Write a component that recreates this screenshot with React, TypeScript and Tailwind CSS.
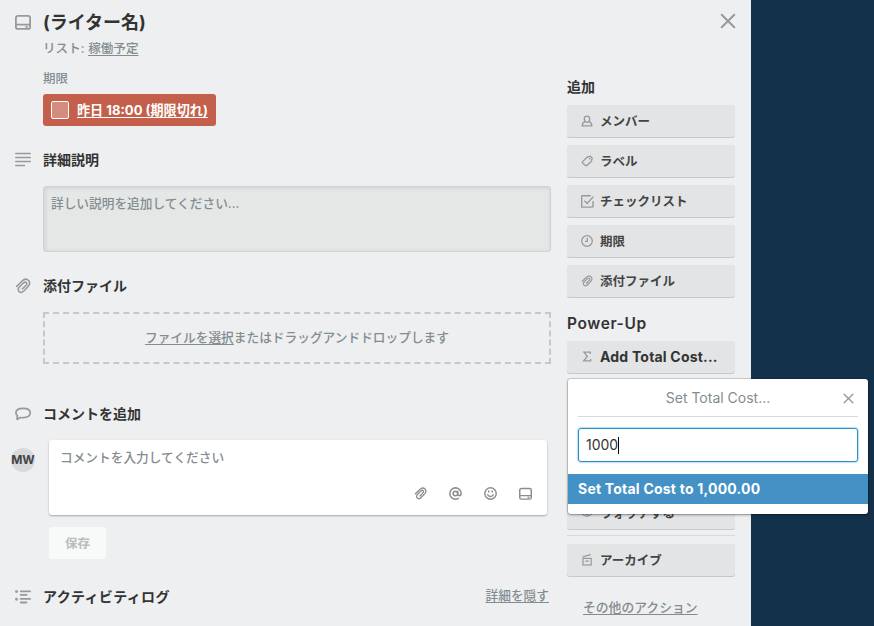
import { clsx } from "clsx";

type IconProps = { className?: string };

function CardIcon({ className }: IconProps) {
  return (
    <svg className={className} viewBox="0 0 16 16" fill="none" stroke="currentColor" strokeWidth="1.8">
      <rect x="0.9" y="1.9" width="14.2" height="13" rx="2" />
      <path d="M1 10.6h14M10.5 12.9h2.2" />
    </svg>
  );
}

function LinesIcon({ className }: IconProps) {
  return (
    <svg className={className} viewBox="0 0 16 16" fill="none" stroke="currentColor" strokeWidth="1.7" strokeLinecap="round">
      <path d="M0.8 1.5h14.4M0.8 5.5h14.4M0.8 9.5h14.4M0.8 13.5h8.6" />
    </svg>
  );
}

function ClipIcon({ className }: IconProps) {
  return (
    <svg className={className} viewBox="0 0 16 16" fill="none" stroke="currentColor" strokeWidth="1.6" strokeLinecap="round" strokeLinejoin="round">
      <path d="M1.7 8.4 7.2 3C9.3 1 11.9.9 13.500 2.500c1.500 1.600 1.300 4-.4 6l-4.300 4.500c-1.500 1.500-3.500 1.800-4.800.5-1.200-1.200-1-3.100.4-4.500l4.200-4.200c.9-.8 2-.9 2.700-.2.700.7.600 1.800-.2 2.600L7.300 11" />
    </svg>
  );
}

function CommentIcon({ className }: IconProps) {
  return (
    <svg className={className} viewBox="0 0 16 16" fill="none" stroke="currentColor" strokeWidth="1.7" strokeLinejoin="round">
      <path d="M8.3 2.3c-4 0-7.4 1.5-7.4 4.4 0 1.1.5 2.1 1.5 2.9L2 13.4l3.200-1.900c.9.2 1.900.3 3 .2 4-.2 7-2 7-5 0-2.800-2.900-4.400-6.900-4.400Z" />
    </svg>
  );
}

function ActivityIcon({ className }: IconProps) {
  return (
    <svg className={className} viewBox="0 0 16 16" fill="none" stroke="currentColor" strokeWidth="1.8" strokeLinecap="round">
      <path d="M5.7 2.300h9.400M5.7 5.900h5.800M5.700 9.900h9.400M5.700 13.500h5.800" />
      <path d="M1.5 2.6v.01M1.5 10.2v.01" strokeWidth="2.9" />
    </svg>
  );
}

function MemberIcon({ className }: IconProps) {
  return (
    <svg className={className} viewBox="0 0 12 12" fill="none" stroke="currentColor" strokeWidth="1.3" strokeLinejoin="round">
      <path d="M4.1 6.3C3.500 5.600 3.300 4.700 3.300 3.800 3.300 2.200 4.300 1.200 6 1.200s2.700 1 2.700 2.600c0 .9-.2 1.800-.8 2.500" />
      <path d="M4.100 6.300C2.300 7 1.200 8.200 1.200 10.900h9.600c0-2.700-1.100-3.900-2.900-4.600-1.100 1.300-2.700 1.300-3.800 0Z" />
    </svg>
  );
}

function LabelIcon({ className }: IconProps) {
  return (
    <svg className={className} viewBox="0 0 12 12" fill="none" stroke="currentColor" strokeWidth="1.3" strokeLinejoin="round">
      <path d="M6.800 1.800 8.700 1.300c.5-.1.900 0 1.200.3l.9.9c.3.300.4.700.3 1.200L10.500 5.800c-.1.300-.2.500-.4.700l-4.300 3.900c-.4.400-.9.400-1.300 0L1.600 7.900c-.4-.4-.4-.9 0-1.300L6 2.300c.2-.3.500-.4.800-.5Z" />
      <path d="M8.700 3.600v.01" strokeWidth="1.7" strokeLinecap="round" />
    </svg>
  );
}

function ChecklistIcon({ className }: IconProps) {
  return (
    <svg className={className} viewBox="0 0 12 12" fill="none" stroke="currentColor" strokeWidth="1.3">
      <path d="M9 .7H1.300C.9.700.6 1 .6 1.400v9.100c0 .4.300.7.7.7h9.100c.4 0 .7-.3.7-.7V5.500" />
      <path d="m3.200 5.300 2.500 2.600 5.700-6.400" />
    </svg>
  );
}

function ClockIcon({ className }: IconProps) {
  return (
    <svg className={className} viewBox="0 0 12 12" fill="none" stroke="currentColor" strokeWidth="1.3">
      <circle cx="6" cy="6" r="5.3" />
      <path d="M6.300 2.800v3.500H4" />
    </svg>
  );
}

function SigmaIcon({ className }: IconProps) {
  return (
    <svg className={className} viewBox="0 0 12 12" fill="none" stroke="currentColor" strokeWidth="1.3">
      <path d="M9.300 3V1.200H3L6.400 5.500 2.700 9.900h7V8.100" />
    </svg>
  );
}

function WatchIcon({ className }: IconProps) {
  return (
    <svg className={className} viewBox="0 0 12 12" fill="none" stroke="currentColor" strokeWidth="1.2">
      <path d="M.6 6C3.600 1.800 8.400 1.800 11.400 6 8.400 10.200 3.600 10.200.6 6Z" />
      <circle cx="6" cy="6" r="1.5" />
    </svg>
  );
}

function ArchiveIcon({ className }: IconProps) {
  return (
    <svg className={className} viewBox="0 0 12 12" fill="none" stroke="currentColor" strokeWidth="1.2">
      <path d="M1.500 2.900 9.800.7" />
      <rect x="2" y="4.4" width="8.2" height="6.6" />
      <path d="M4.300 7.100h3.600" />
    </svg>
  );
}

function AtIcon({ className }: IconProps) {
  return (
    <svg className={className} viewBox="0 0 12 12" fill="none" stroke="currentColor" strokeWidth="1.4" strokeLinecap="round">
      <circle cx="5.9" cy="6" r="2.1" />
      <path d="M8.100 3.900v2.800c0 .8.600 1.300 1.400 1.300 1.100 0 1.700-.9 1.700-2C11.200 3 8.900.8 6 .8A5.200 5.200 0 0 0 .8 6c0 2.900 2.300 5.200 5.200 5.200 1 0 1.900-.3 2.600-.7" />
    </svg>
  );
}

function SmileIcon({ className }: IconProps) {
  return (
    <svg className={className} viewBox="0 0 12 12" fill="none" stroke="currentColor" strokeWidth="1.3" strokeLinecap="round">
      <circle cx="6" cy="6" r="5.3" />
      <path d="M4.400 3.700v1M7.600 3.700v1M3.400 7.200c.8 2 4.400 2 5.200 0" />
    </svg>
  );
}

function CloseIcon({ className }: IconProps) {
  return (
    <svg className={className} viewBox="0 0 16 16" fill="none" stroke="currentColor" strokeWidth="2" strokeLinecap="round">
      <path d="m1.700 1.700 12.600 12.600M14.300 1.700 1.700 14.300" />
    </svg>
  );
}

function SectionHeading({ icon, title, className }: { icon: React.ReactNode; title: string; className?: string }) {
  return (
    <div className={clsx("flex h-6 items-center", className)}>
      <span className="flex w-[43px] shrink-0 pl-[15px] text-[#999]">{icon}</span>
      <h3 className="pb-0.5 text-[14px] font-bold whitespace-nowrap text-[#333]">{title}</h3>
    </div>
  );
}

function SideButton({
  icon,
  label,
  className,
  labelClassName = "pt-[2px] text-[12.5px] text-[#444]",
}: {
  icon: React.ReactNode;
  label: string;
  className?: string;
  labelClassName?: string;
}) {
  return (
    <button
      className={clsx(
        "flex h-8 w-[168px] shrink-0 items-center rounded-[3px] bg-[#e2e4e6] pl-[14px] font-bold whitespace-nowrap shadow-[0_1px_0_#c4c9cc]",
        className,
      )}
    >
      <span className="mr-[7px] flex w-3 text-[#999]">{icon}</span>
      <span className={labelClassName}>{label}</span>
    </button>
  );
}

const addButtons = [
  { label: "メンバー", icon: <MemberIcon className="size-3" /> },
  { label: "ラベル", icon: <LabelIcon className="size-3" /> },
  { label: "チェックリスト", icon: <ChecklistIcon className="size-[13px] shrink-0" /> },
  { label: "期限", icon: <ClockIcon className="size-3" /> },
  { label: "添付ファイル", icon: <ClipIcon className="size-3" /> },
];

function MainColumn() {
  return (
    <main className="flex w-[551px] shrink-0 flex-col">
      <div className="mt-[10px] flex h-6 items-center">
        <CardIcon className="mr-3 ml-[15px] size-4 text-[#999]" />
        <h2 className="text-[18px] font-bold text-[#333]">(ライター名)</h2>
      </div>
      <p className="mt-[5px] ml-[43px] h-5 text-[12.5px] leading-5 font-medium tracking-[0.1px]">
        リスト: <a className="underline underline-offset-2">稼働予定</a>
      </p>
      <p className="mt-[10px] ml-[43px] h-5 text-[12.5px] leading-5 font-medium">期限</p>
      <div className="mt-[5px] ml-[43px] flex h-8 w-[173px] items-center rounded-[3px] bg-[#c35f4a] pl-2 text-[13.1px] font-bold whitespace-nowrap text-white">
        <span className="mr-2 size-[18px] rounded-[2px] border border-white bg-[#d28d7f]" />
        <span className="pt-px underline underline-offset-2">昨日 18:00 (期限切れ)</span>
      </div>

      <SectionHeading className="mt-[22px]" icon={<LinesIcon className="size-4" />} title="詳細説明" />
      <div className="mt-[14px] ml-[43px] h-[66px] rounded-[3px] border border-[#cdd2d4] bg-[#e4e7e6] px-[7px] pt-[7px] text-[12.7px] leading-5 font-medium shadow-[inset_1px_1px_4px_rgba(0,0,0,0.1)]">
        詳しい説明を追加してください...
      </div>

      <SectionHeading className="mt-[22px]" icon={<ClipIcon className="size-4" />} title="添付ファイル" />
      <div className="mt-[14px] ml-[43px] flex h-[52px] items-center justify-center border-2 border-dashed border-[#c4c9cc] text-[12.7px] font-medium">
        <span className="underline underline-offset-2">ファイルを選択</span>またはドラッグアンドドロップします
      </div>

      <SectionHeading className="mt-[38px]" icon={<CommentIcon className="size-4" />} title="コメントを追加" />
      <div className="mt-[14px] flex">
        <div className="mt-2 mr-[14px] ml-[11px] flex size-6 items-center justify-center rounded-full bg-[#d6dadc] text-[12px] font-bold text-[#444]">
          MW
        </div>
        <div className="flex h-[75px] w-[498px] flex-col justify-between rounded-[3px] bg-white pt-2 pr-[15px] pb-[15px] pl-[11px] shadow-[0_1px_2px_rgba(0,0,0,0.3)]">
          <p className="text-[12.7px] leading-5 font-medium">コメントを入力してください</p>
          <div className="flex justify-end gap-[22px] text-[#8c8c8c]">
            <ClipIcon className="size-[13px]" />
            <AtIcon className="size-[13px]" />
            <SmileIcon className="size-[13px]" />
            <CardIcon className="size-[13px]" />
          </div>
        </div>
      </div>
      <button className="mt-3 ml-[49px] h-8 w-[57px] rounded-[3px] bg-[#f8f9f9] pt-[2px] text-[12.5px] font-bold text-[#b8bcbf]">
        保存
      </button>

      <div className="mt-[26px] flex items-center justify-between pr-[2px]">
        <SectionHeading icon={<ActivityIcon className="size-4" />} title="アクティビティログ" className="tracking-[0.35px]" />
        <a className="pb-0.5 text-[12.7px] font-medium underline underline-offset-2">詳細を隠す</a>
      </div>
    </main>
  );
}

function Sidebar() {
  return (
    <aside className="ml-4 flex w-[168px] shrink-0 flex-col">
      <CloseIcon className="mt-[13px] -mr-px size-4 self-end text-[#999]" />
      <h3 className="mt-[47px] h-[22px] text-[14px] leading-[22px] font-bold text-[#333]">追加</h3>
      <div className="mt-[7px] flex flex-col gap-2">
        {addButtons.map((button) => (
          <SideButton key={button.label} {...button} />
        ))}
      </div>
      <h3 className="mt-4 h-[22px] text-[15.5px] leading-[22px] font-semibold tracking-[0.6px] text-[#333]">Power-Up</h3>
      <SideButton
        className="mt-[6px]"
        labelClassName="pb-px text-[14px] tracking-[0.2px] text-[#333]"
        icon={<SigmaIcon className="size-3" />}
        label="Add Total Cost..."
      />
      <SideButton className="mt-[124px]" icon={<WatchIcon className="size-3" />} label="ウォッチする" />
      <hr className="mt-[6px] border-[#d6dadc]" />
      <SideButton className="mt-2" icon={<ArchiveIcon className="size-3" />} label="アーカイブ" />
      <a className="mt-[22px] ml-4 text-[12.8px] leading-5 font-medium underline underline-offset-2">その他のアクション</a>
    </aside>
  );
}

function TotalCostPopover() {
  return (
    <section className="absolute top-[379px] left-[568px] h-[135px] w-[300px] rounded-[3px] bg-white shadow-[0_1px_3px_rgba(0,0,0,0.35),0_0_0_1px_rgba(0,0,0,0.12)]">
      <header className="mx-[10px] flex h-[38px] items-center border-b border-[#d6dadc]">
        <h4 className="flex-1 pl-[15px] text-center text-[14px]">Set Total Cost...</h4>
        <CloseIcon className="mt-px mr-[4px] size-[11px] text-[#999]" />
      </header>
      <div className="mx-[10px] mt-[11px] flex h-[34px] items-center rounded-[3px] border border-[#298fca] px-[7px] text-[14px] text-[#333] shadow-[0_0_2px_#298fca]">
        <span className="pb-px">1000</span>
        <span className="h-[17px] w-px bg-black" />
      </div>
      <button className="mt-3 flex h-[30px] w-full items-center bg-[#4491c6] pb-px pl-[10px] text-[14px] font-bold tracking-[0.22px] text-white">
        Set Total Cost to 1,000.00
      </button>
    </section>
  );
}

export default function App() {
  return (
    <div className="relative h-[626px] w-[874px] overflow-hidden bg-[#13314a] font-[Inter,'Noto_Sans_CJK_JP',sans-serif] text-[#838c91]">
      <div className="flex h-full w-[751px] bg-[#edeff0]">
        <MainColumn />
        <Sidebar />
      </div>
      <TotalCostPopover />
    </div>
  );
}
